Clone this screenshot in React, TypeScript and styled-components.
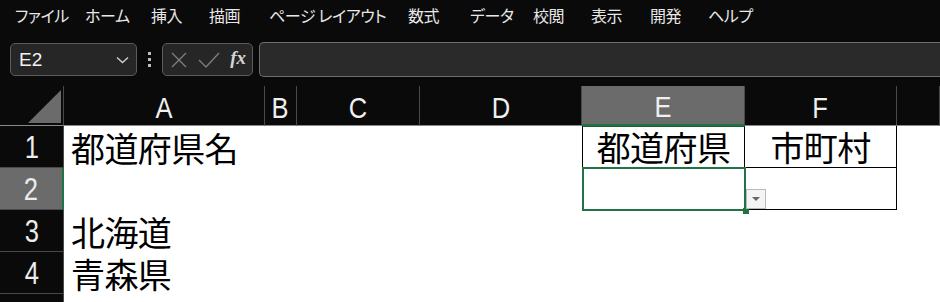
import React from "react";
import styled, { createGlobalStyle } from "styled-components";

const GlobalStyle = createGlobalStyle`
  html, body {
    margin: 0;
    padding: 0;
    background: #0a0a0a;
    overflow: hidden;
  }
  body {
    font-family: "Noto Sans CJK JP", "Noto Sans", sans-serif;
  }
`;

const Page = styled.div`
  width: 940px;
  height: 302px;
  background: #0a0a0a;
  overflow: hidden;
`;

const MenuBar = styled.div`
  display: flex;
  height: 30px;
  align-items: center;
  padding-left: 15px;
  font-feature-settings: "palt";
`;

const MenuItem = styled.div<{ $w: number }>`
  width: ${(p) => p.$w}px;
  flex: none;
  font-size: 16px;
  letter-spacing: -0.4px;
  color: #e8e8e8;
  line-height: 30px;
  white-space: nowrap;
`;

const FormulaRow = styled.div`
  display: flex;
  align-items: center;
  height: 35px;
  margin-top: 12px;
  padding-left: 10px;
`;

const Box = styled.div`
  height: 33px;
  box-sizing: border-box;
  border: 1px solid #5c5c5c;
  border-radius: 5px;
  background: #262626;
  display: flex;
  align-items: center;
`;

const NameBox = styled(Box)`
  width: 127px;
  padding: 0 7px 0 8px;
  justify-content: space-between;
  color: #f2f2f2;
  font-family: "Liberation Sans", Arial, sans-serif;
  font-size: 19px;
`;

const Dots = styled.div`
  width: 25px;
  display: flex;
  flex-direction: column;
  align-items: center;
  gap: 3px;
  span {
    width: 3px;
    height: 3px;
    background: #bdbdbd;
  }
`;

const ButtonsBox = styled(Box)`
  width: 91px;
  padding: 0 6px 0 8px;
  justify-content: space-between;
`;

const FxText = styled.span`
  font-family: "Liberation Serif", "DejaVu Serif", serif;
  font-style: italic;
  font-weight: bold;
  font-size: 19px;
  color: #d4d4d4;
  margin-top: -3px;
`;

const FormulaInput = styled.div`
  flex: 1;
  margin-left: 6px;
  margin-right: -10px;
  height: 35px;
  box-sizing: border-box;
  border-top: 1px solid #6e6e6e;
  border-bottom: 1px solid #6e6e6e;
  border-left: 1px solid #6e6e6e;
  border-radius: 5px 0 0 5px;
  background: #2a2a2a;
`;

const Sheet = styled.div`
  margin-top: 9px;
  display: grid;
  grid-template-columns: 64px 201px 32px 123px 162px 163px 152px 1fr;
  grid-template-rows: 40px repeat(5, 42px);
`;

const Corner = styled.div`
  position: relative;
  border-right: 1px solid #4a4a4a;
  border-bottom: 1px solid #8a8a8a;
  box-sizing: border-box;
  svg {
    position: absolute;
    left: 28px;
    top: 4px;
  }
`;

const ColHead = styled.div<{ $active?: boolean }>`
  box-sizing: border-box;
  display: flex;
  align-items: center;
  justify-content: center;
  background: ${(p) => (p.$active ? "#6b6b6b" : "#0a0a0a")};
  border-right: 1px solid #4a4a4a;
  border-bottom: ${(p) => (p.$active ? "2px solid #217346" : "1px solid #8a8a8a")};
  color: #f0f0f0;
  font-family: "Liberation Sans", Arial, sans-serif;
  font-size: 30px;
  padding-top: 4px;
  span {
    display: inline-block;
    transform: scaleX(0.85);
  }
`;

const RowHead = styled.div<{ $active?: boolean }>`
  box-sizing: border-box;
  display: flex;
  align-items: center;
  justify-content: center;
  background: ${(p) => (p.$active ? "#6b6b6b" : "#0a0a0a")};
  border-right: ${(p) => (p.$active ? "2px solid #217346" : "1px solid #4a4a4a")};
  border-bottom: 1px solid #4a4a4a;
  color: #ececec;
  font-family: "Liberation Sans", Arial, sans-serif;
  font-size: 32px;
  padding-top: 2px;
  span {
    display: inline-block;
    transform: scaleX(0.8);
  }
`;

const Cell = styled.div<{ $center?: boolean }>`
  box-sizing: border-box;
  background: #ffffff;
  color: #000;
  font-size: 34px;
  letter-spacing: -0.6px;
  line-height: 1;
  display: flex;
  align-items: flex-end;
  justify-content: ${(p) => (p.$center ? "center" : "flex-start")};
  padding: 0 0 3px ${(p) => (p.$center ? "0" : "7px")};
  white-space: nowrap;
  overflow: visible;
  position: relative;
`;

const TextCell = styled(Cell)`
  z-index: 1;
`;

const BorderCell = styled(Cell)<{ $top?: boolean; $noLeft?: boolean }>`
  border-left: ${(p) => (p.$noLeft ? "none" : "1px solid #000")};
  border-right: 1px solid #000;
  border-bottom: 1px solid #000;
  border-top: ${(p) => (p.$top ? "1px solid #1d5e3a" : "none")};
`;

const SelectedCell = styled(Cell)`
  border: 2px solid #217346;
  margin: -1px -1px -1px 0;
  z-index: 2;
`;

const Handle = styled.div`
  position: absolute;
  right: -5px;
  bottom: -5px;
  width: 6px;
  height: 6px;
  background: #217346;
`;

const DropButton = styled.div`
  position: absolute;
  right: -22px;
  bottom: 0px;
  width: 20px;
  height: 20px;
  box-sizing: border-box;
  background: #f4f4f4;
  border: 1px solid #b9b9b9;
  display: flex;
  align-items: center;
  justify-content: center;
  &::after {
    content: "";
    border-left: 4px solid transparent;
    border-right: 4px solid transparent;
    border-top: 4px solid #666;
  }
`;

const menus: [string, number][] = [
  ["ファイル", 70],
  ["ホーム", 66],
  ["挿入", 58],
  ["描画", 60],
  ["ページ レイアウト", 139],
  ["数式", 62],
  ["データ", 63],
  ["校閲", 58],
  ["表示", 59],
  ["開発", 58],
  ["ヘルプ", 60],
];

const cols = ["A", "B", "C", "D", "E", "F", ""];

const Blank = () => <Cell />;

export default function App() {
  return (
    <Page>
      <GlobalStyle />
      <MenuBar>
        {menus.map(([m, w]) => (
          <MenuItem key={m} $w={w}>
            {m}
          </MenuItem>
        ))}
      </MenuBar>

      <FormulaRow>
        <NameBox>
          <span>E2</span>
          <svg width="13" height="8" viewBox="0 0 13 8">
            <path d="M1 1.5 L6.5 6.5 L12 1.5" fill="none" stroke="#cfcfcf" strokeWidth="1.4" />
          </svg>
        </NameBox>
        <Dots>
          <span />
          <span />
          <span />
        </Dots>
        <ButtonsBox>
          <svg width="16" height="16" viewBox="0 0 16 16">
            <path d="M1 1 L15 15 M15 1 L1 15" stroke="#7d7d7d" strokeWidth="1.4" />
          </svg>
          <svg width="22" height="16" viewBox="0 0 22 16">
            <path d="M1 8 L8 15 L21 1" fill="none" stroke="#7d7d7d" strokeWidth="1.4" />
          </svg>
          <FxText>fx</FxText>
        </ButtonsBox>
        <FormulaInput />
      </FormulaRow>

      <Sheet>
        <Corner>
          <svg width="34" height="34" viewBox="0 0 34 34">
            <polygon points="33,0 33,33 0,33" fill="#6b6b6b" />
          </svg>
        </Corner>
        {cols.map((c, i) => (
          <ColHead key={i} $active={c === "E"}>
            <span>{c}</span>
          </ColHead>
        ))}

        <RowHead>
          <span>1</span>
        </RowHead>
        <TextCell>都道府県名</TextCell>
        <Blank />
        <Blank />
        <Blank />
        <BorderCell $center $top>
          都道府県
        </BorderCell>
        <BorderCell $center $noLeft>
          市町村
        </BorderCell>
        <Blank />

        <RowHead $active>
          <span>2</span>
        </RowHead>
        <Blank />
        <Blank />
        <Blank />
        <Blank />
        <SelectedCell>
          <Handle />
          <DropButton />
        </SelectedCell>
        <BorderCell $noLeft />
        <Blank />

        <RowHead>
          <span>3</span>
        </RowHead>
        <TextCell>北海道</TextCell>
        <Blank />
        <Blank />
        <Blank />
        <Blank />
        <Blank />
        <Blank />

        <RowHead>
          <span>4</span>
        </RowHead>
        <TextCell>青森県</TextCell>
        <Blank />
        <Blank />
        <Blank />
        <Blank />
        <Blank />
        <Blank />

        <RowHead />
        <Blank />
        <Blank />
        <Blank />
        <Blank />
        <Blank />
        <Blank />
        <Blank />
      </Sheet>
    </Page>
  );
}
